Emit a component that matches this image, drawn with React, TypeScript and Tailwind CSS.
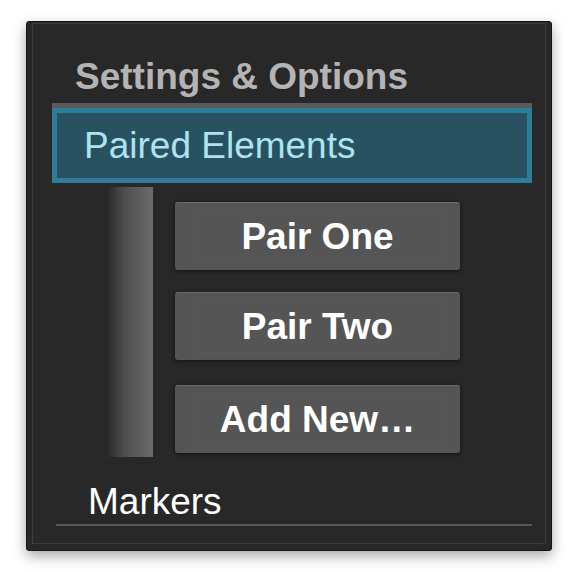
import React from "react";

const font = { fontFamily: '"Liberation Sans", Arial, sans-serif' };

function PairButton({ label, extra = "" }: { label: string; extra?: string }) {
  return (
    <div className={"relative flex h-[68px] w-[285px] items-center justify-center rounded-[3px] border-t border-[#6c6c6c] bg-[#555555] shadow-[0_1px_4px_rgba(0,0,0,0.6)] " + extra}>
      <div className="pointer-events-none absolute inset-x-[18px] inset-y-[7px] border border-[rgba(255,255,255,0.025)]" />
      <span className="relative text-[37px] font-bold leading-none text-white">{label}</span>
    </div>
  );
}

export default function App() {
  return (
    <div className="h-[572px] w-[580px] bg-white pl-[26px] pt-[21px]" style={font}>
      <div className="h-[530px] w-[526px] rounded-[3px] border border-[#161616] bg-[#282828] pb-[6px] pl-[5px] pr-[5px] pt-[1px] shadow-[0_5px_14px_rgba(0,0,0,0.35)]">
        <div className="h-full w-full border border-[#3e3e3e]">
          <div className="ml-[42px] mt-[34px] h-[37px] whitespace-nowrap text-[37px] font-bold leading-none text-[#b4b4b4]">
            Settings &amp; Options
          </div>
          <div className="ml-[19px] mt-[8px] h-[5px] w-[480px] bg-[#5a5a5a]" />
          <div className="ml-[19px] flex h-[75px] w-[480px] items-center border-[5px] border-[#2d7d98] bg-[#285262] pl-[27px]">
            <span className="text-[37px] leading-none text-[#ade4ef]">Paired Elements</span>
          </div>
          <div className="ml-[74px] mt-[4px] flex gap-[22px]">
            <div className="h-[270px] w-[46px] bg-[linear-gradient(to_right,#292929,#4c4c4c_35%,#6b6b6b)]" />
            <div className="flex flex-col gap-[22px] pt-[15px]">
              <PairButton label="Pair One" />
              <PairButton label="Pair Two" />
              <PairButton label="Add New…" extra="mt-[3px]" />
            </div>
          </div>
          <div className="ml-[55px] mt-[26px] h-[37px] text-[37px] leading-none text-white">Markers</div>
          <div className="ml-[23px] mt-[4px] h-[2px] w-[476px] bg-[#575757]" />
        </div>
      </div>
    </div>
  );
}
